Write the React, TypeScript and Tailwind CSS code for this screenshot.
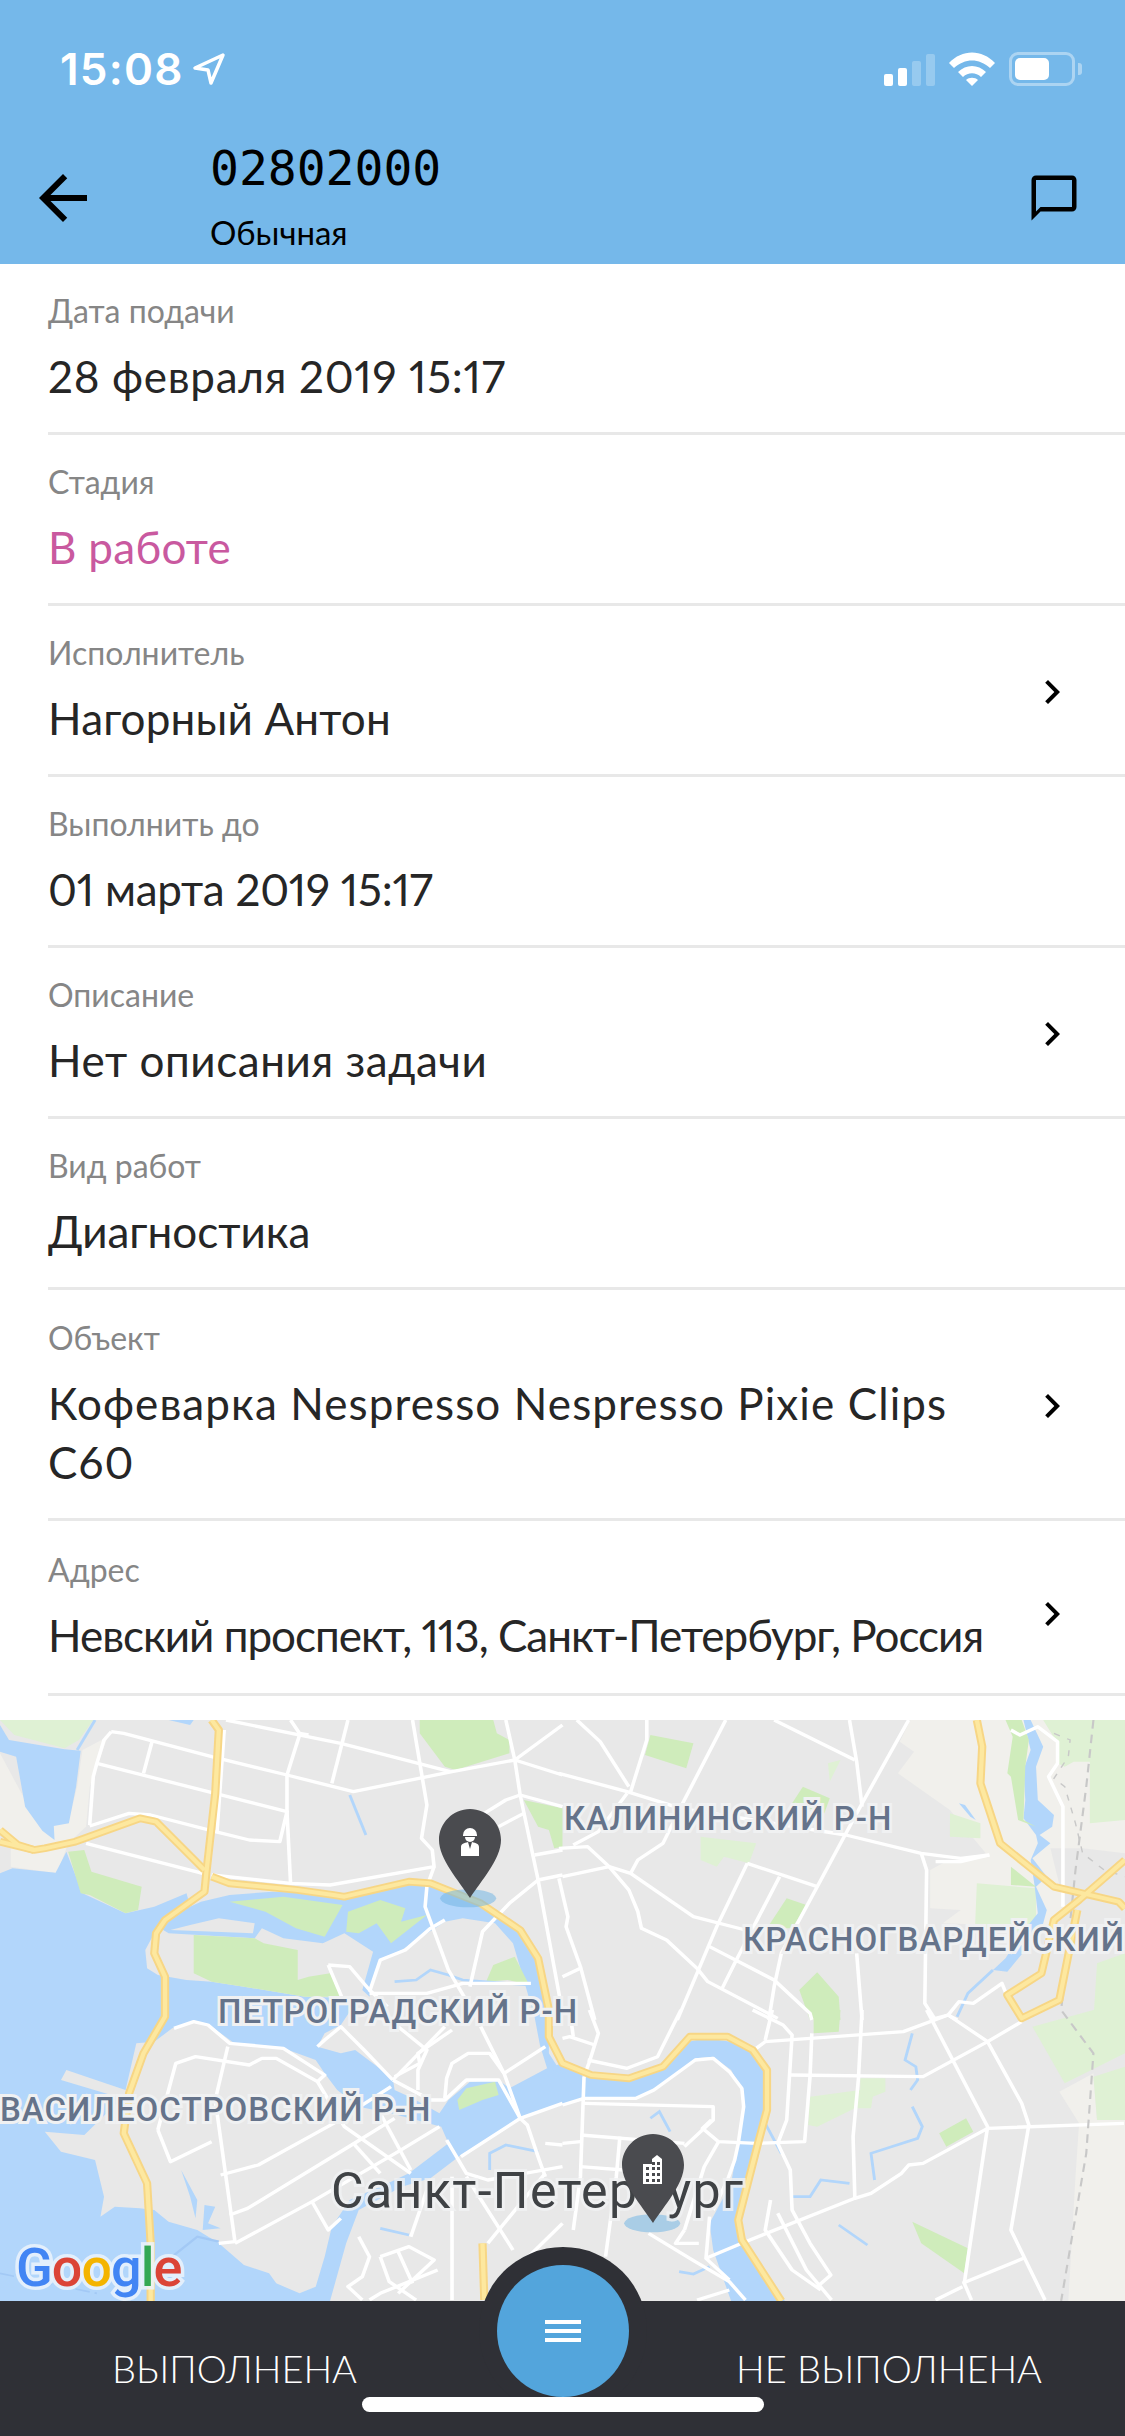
import type { ReactNode } from 'react'

const font = 'font-["Lato","Noto_Sans",sans-serif]'

// map is sketched in crop units: 1568 wide per 563px, 3 units per px high
const waterAreas = [
  '0,15 25,60 180,88 225,92 212,200 192,310 150,318 152,360 118,332 70,260 45,110 0,95',
  '0,460 35,445 155,458 185,395 230,520 350,580 430,560 520,520 525,540 470,590 430,640 405,690 410,745 440,765 520,780 590,785 680,800 850,830 1000,835 950,915 905,940 885,980 950,1000 990,990 1095,1075 1100,1110 1150,1135 1225,1180 1250,1140 1310,1085 1390,1080 1420,1105 1525,1045 1568,1030 1628,1065 1748,1075 1848,1040 1918,965 1968,955 2038,965 2098,990 2138,1050 2138,1170 2068,1490 2068,1570 2188,1743 2038,1743 1988,1590 1978,1510 2038,1390 2058,1270 2073,1160 2068,1110 2038,1050 1988,1010 1938,1015 1848,1090 1818,1110 1768,1135 1618,1135 1568,1155 1450,1195 1285,1305 1200,1375 1120,1400 1000,1470 965,1570 920,1743 0,1743',
  '440,620 470,590 560,545 640,525 760,515 900,520 960,540 1130,495 1210,495 1350,560 1450,630 1500,710 1530,900 1530,1000 1560,1050 1568,1060 1525,1045 1505,975 1490,890 1430,670 1380,610 1290,595 1240,605 1120,690 1065,715 1035,800 1030,830 1010,810 1040,695 960,640 900,670 790,655 730,625 710,655 470,640',
  '2853,0 2873,0 2908,80 2888,140 2893,240 2938,285 2933,320 2898,345 2928,370 2878,415 2918,470 2888,500 2918,570 2903,630 2858,690 2808,755 2768,750 2803,715 2848,640 2893,580 2883,490 2873,420 2893,370 2888,345 2853,295 2858,240 2853,150 2873,90',
  '2673,250 2690,255 2720,300 2705,290',
  '470,0 540,0 530,15',
]

const greyIslands = [
  '380,970 430,965 480,925 540,905 590,920 660,975 790,985 880,1020 905,1060 940,1110 1000,1160 1090,1180 1230,1220 1250,1270 1140,1360 1090,1385 975,1440 925,1520 905,1610 880,1700 835,1720 770,1690 750,1660 680,1635 610,1570 550,1530 470,1505 430,1470 390,1465 320,1460 280,1490 290,1430 265,1320 170,1295 125,1235 235,1245 340,1135 170,1080 185,1050 300,1092 350,1110',
  '530,615 610,595 710,610 705,640 475,630',
]

const offLand = [
  '0,100 110,320 150,310 190,310 215,200 230,90 300,50 250,200 240,320 190,370 160,460 30,440 30,380 0,340',
  '2538,0 3136,0 3136,400 3018,385 2928,385 2968,560 2928,620 2628,610 2678,570 2593,565 2593,450 2628,430 2748,400 2648,270 2503,160 2548,95 2508,65',
  '2953,1115 3048,1060 3058,1200 3136,1200 3136,1743 2978,1743 2998,1370 3008,1210',
]

const paleGreen = [
  '0,0 260,0 220,60 180,85 40,45',
  '1953,350 2108,370 2088,430 2018,410 1998,440 1953,420',
  '2308,130 2343,120 2313,185',
  '2648,280 2733,310 2733,355 2648,350',
  '2723,490 2888,505 2888,640 2718,620',
  '2908,0 3136,0 3136,300 3038,310 3038,125 2993,125 2968,140 2948,130 2948,70',
  '3058,730 3136,700 3136,870 3378,870 3048,900',
  '2878,920 3048,870 3136,870 3136,1000 2968,1090',
  '3048,1070 3136,1040 3136,1200 3058,1200',
  '2258,1130 2398,1110 2398,1075 2468,1075 2468,1115 2433,1130 2428,1165 2383,1165 2278,1220 2253,1215',
  '655,1245 760,1210 810,1280 710,1330',
]

const parks = [
  '190,395 235,390 255,455 395,500 385,570 350,580 250,525 225,520',
  '640,545 790,530 955,555 905,650 825,625 740,575',
  '970,575 1060,540 1130,565 1118,605 1190,585 1090,670 1050,610 1000,640 965,635',
  '540,645 710,655 735,670 830,690 830,780 860,770 920,760 950,830 850,830 680,800 590,785 540,760',
  '1170,0 1375,0 1385,40 1420,60 1420,100 1270,150 1240,140 1170,40',
  '1460,240 1568,265 1568,380 1545,385 1530,330 1500,320',
  '1355,785 1375,735 1435,710 1475,795 1415,780',
  '1813,45 1933,70 1913,145 1798,105',
  '2238,200 2313,235 2298,280 2208,250',
  '2193,535 2248,555 2208,625 2138,625',
  '2228,810 2278,757 2338,830 2343,900 2258,900',
  '2803,0 2848,0 2868,60 2858,140 2853,300 2888,320 2838,300 2818,170 2808,160 2823,50',
  '2818,440 2888,500 2818,495',
  '2268,870 2343,870 2338,935 2268,940',
  '2618,1240 2693,1195 2713,1235 2638,1280',
  '2543,1505 2698,1585 2688,1660 2568,1570',
  '1275,1140 1300,1105 1380,1085 1390,1125 1345,1140 1280,1170',
]

const roads = [
  '630,0 950,70 1255,155',
  '310,35 345,40 590,110 800,165 985,215 1260,155 1435,120',
  '310,35 290,60 270,130 260,170 250,315',
  '270,130 580,215 800,275 780,365 695,360 600,335 420,285 360,280 250,318',
  '425,60 400,160',
  '800,165 800,275 810,490',
  '835,45 800,165',
  '810,0 835,40 860,45',
  '970,0 925,190',
  '625,30 605,335',
  '1150,0 1190,255 1175,355 1205,390 1210,440 920,495 810,490 590,465',
  '240,370 565,460',
  '1410,0 1435,120 1450,225 1500,480 1565,860',
  '1568,15 1435,120 1568,165',
  '1450,225 1568,260',
  '1350,280 1410,240 1450,225',
  '1390,320 1460,280',
  '1500,480 1568,465',
  '1490,405 1568,390',
  '1500,480 1420,550 1345,635 1310,800',
  '1210,440 1190,500 1185,560 1250,750 1310,860',
  '915,735 975,740 1030,810 1080,860',
  '915,735 960,850',
  '1030,820 1190,820 1290,790 1480,790',
  '1240,600 1200,625 1130,690 1060,720 1030,815',
  // top right
  '1558,160 1748,215 1898,265 2358,345 2568,400 2678,415 2758,405',
  '1803,0 1803,60 1758,215',
  '1608,0 1673,65 1753,200',
  '1748,220 1668,335 1598,375',
  '1558,385 1638,380 1698,440 1753,510 1778,575 1788,625 1858,660 1943,745 1973,785 2168,895',
  '1568,470 1698,440 1758,460 1933,590 2078,630',
  '2023,0 1903,250 1848,370 1778,420 1758,460',
  '1558,475 1583,590 1578,620 1618,740 1658,900',
  '1568,770 1618,745',
  '2533,0 2398,260 2278,500 2178,700 2158,800 2143,900',
  '2368,0 2388,125 2403,260',
  '2158,0 2383,120',
  '2083,430 2278,500',
  '2173,470 2048,730 2013,805',
  '2083,430 1998,620 1888,900',
  '1978,680 2158,780 2258,880 2263,900',
  '2568,400 2583,450 2578,850 2608,900',
  '2608,425 2678,425 2758,405',
  '2388,700 2403,900',
  '2643,885 2673,845 2713,850 2793,790 2808,830',
  '2608,895 2643,885 2668,900',
  '2818,30 2843,45 2893,20 2948,65 2948,130 2923,170 2963,260 2963,560',
  // lower left
  '440,1230 490,1030 545,1010 695,1035 730,1015 770,1015 885,1085 960,1220 1145,1360',
  '440,1230 475,1325 590,1265',
  '485,925 540,905 580,915 640,970 790,985 905,1065 885,1085',
  '635,980 600,1140 655,1565 610,1570',
  '615,1365 720,1335 930,1210 1090,1100',
  '640,1485 690,1465 980,1275 1100,1195',
  '655,1570 870,1445 1110,1295 1225,1220',
  '870,1445 915,1530 950,1495',
  '985,1270 1060,1360',
  '1060,1180 1145,1350',
  '1095,1080 1240,920',
  '1100,1070 1170,1030 1165,1000 1260,930',
  '1095,1080 1200,1140 1240,1140 1300,1080 1390,1080 1450,1195',
  '1240,1135 1245,1075 1260,1030 1305,1000 1365,1000 1405,1060',
  '1405,1060 1520,980',
  '1340,920 1405,1060 1450,1195 1470,1215 1500,1310 1520,1370',
  '885,980 905,960 950,920 1015,990 1095,1080',
  '1110,920 1190,990 1165,1050 1165,1110',
  '1285,1310 1450,1195 1568,1150',
  '1245,1260 1300,1360 1360,1380 1568,1340',
  '1060,1610 1140,1580 1210,1620 1110,1720',
  '1060,1610 1085,1685 1160,1740',
  '1110,1595 1150,1690',
  '1000,1550 1030,1610 1010,1670 970,1700 1010,1740',
  '1030,1740 1060,1720 1220,1650',
  '1145,1550 1190,1410',
  '1300,1370 1430,1590',
  '1260,1370 1260,1740',
  '1520,1360 1360,1570',
  '1520,1270 1568,1275',
  '1350,1740 1568,1510',
  // lower right
  '1568,1155 1628,1135 1773,1135 1823,1110 1938,1020 1988,1015 2033,1055 2068,1105 2073,1160 2058,1270 2048,1320 2028,1380 1988,1470',
  '1628,1070 1618,1370 1598,1530',
  '1628,1150 1988,1160 1988,1200 1908,1280',
  '1638,1020 1748,1045 1833,1010 1898,870',
  '1643,870 1668,940 1643,1025 1628,1070',
  '1568,955 1588,950 1658,975',
  '1588,870 1598,950',
  '1568,1270 1618,1265',
  '1618,1245 1908,1270',
  '1728,1250 1718,1370 1688,1610',
  '1618,1340 1738,1350',
  '1983,1200 1958,1225 2003,1265 2108,1270 2243,1265 2258,1070',
  '2003,1265 1963,1340 1908,1530',
  '2108,985 2133,965 2518,935 2643,885',
  '2153,870 2133,960',
  '2098,870 2183,915 2208,945 2193,1200 2168,1270 2203,1350 2208,1470 2258,1570 2316,1665 2278,1700',
  '2168,1480 2248,1650 2318,1740',
  '2263,940 2258,1070',
  '2203,1065 2573,1070 2753,965 2848,905',
  '2403,870 2393,1075 2378,1250 2383,1435',
  '1968,1615 2078,1565 2383,1435 2428,1420 2513,1360 2533,1335 2573,1330 2753,1225 3133,1210',
  '2583,870 2753,1220 2688,1690 2708,1740',
  '2643,885 2753,965 2848,1150 2868,1215 2818,1530 2913,1740',
  '2683,1690 2853,1615',
  '2608,1740 2683,1700',
  '2148,1440 2133,1530 2208,1650 2288,1710',
  '1808,1540 1938,1625 2033,1685 2078,1740',
  '1978,1490 1968,1615 2033,1680',
  '1908,1530 1883,1570 1948,1570',
  '1943,1740 2033,1710',
]

const streams = [
  '975,225 1020,345',
  '1100,785 1160,780 1200,750 1250,765 1290,780 1480,795',
  '215,90 265,0',
  '2668,890 2698,820 2768,750',
  '2543,940 2523,1020 2553,1040 2558,1080 2538,1110',
  '2543,1160 2571,1220 2558,1255 2428,1300 2438,1380',
  '2208,1430 2258,1430 2288,1380 2368,1390',
  '2338,1515 2418,1575',
  '1813,1195 1838,1175 1868,1235',
  '1893,1655 1933,1662 1978,1640',
  '2133,1210 2178,1300',
  '1365,1350 1365,1300 1410,1275 1500,1295',
  '1060,1525 1140,1545',
]

const motorways = [
  '0,330 50,375 95,390 125,385 210,365 390,295 435,305 570,450',
  '0,365 95,390',
  '590,0 610,30 600,220 575,460 570,515 460,600 435,640 430,700 460,770 460,890 400,1000 360,1120 345,1240 410,1390 420,1570 420,1743',
  '590,470 640,490 830,510 930,525 960,530 1140,485 1200,490 1340,550 1450,630 1500,715 1530,870 1530,950 1568,1030 1648,1065 1753,1075 1848,1040 1923,950 2028,950 2098,990 2138,1050 2138,1170 2113,1270 2058,1500 2068,1560 2178,1743',
  '2723,0 2738,80 2733,190 2788,370 2938,500 3118,545 3136,565',
  '3136,420 3008,540 2938,600 2903,760 2808,825 2848,895 2953,840 3003,570',
  '1345,1570 1350,1740',
]

function CityMap() {
  return (
    <svg className="absolute inset-0 h-full w-full" viewBox="0 0 3136 1743" preserveAspectRatio="none">
      <rect width="3136" height="1743" fill="#e8e8e8" />
      {offLand.map((p) => <polygon key={p} points={p} fill="#f1f0ec" />)}
      {paleGreen.map((p) => <polygon key={p} points={p} fill="#dff1d4" />)}
      {waterAreas.map((p) => <polygon key={p} points={p} fill="#b2d6fb" />)}
      {greyIslands.map((p) => <polygon key={p} points={p} fill="#e8e8e8" />)}
      {parks.map((p) => <polygon key={p} points={p} fill="#cfecbb" />)}
      <polygon points="505,1350 550,1440 545,1495 530,1430" fill="#b2d6fb" />
      <polygon points="570,1455 600,1460 580,1510 615,1525 565,1530" fill="#b2d6fb" />
      <polyline points="0,1660 270,1720" fill="none" stroke="#a3c9f5" strokeWidth="5" strokeDasharray="40 14" />
      <polyline points="480,1610 550,1550 610,1565" fill="none" stroke="#a3c9f5" strokeWidth="7" />
      {streams.map((p) => <polyline key={p} points={p} fill="none" stroke="#b2d6fb" strokeWidth="8" />)}
      {roads.map((p) => <polyline key={p} points={p} fill="none" stroke="#ffffff" strokeWidth="10" strokeLinejoin="round" />)}
      <polyline points="3048,0 3028,200 2998,450 2958,870 3048,1000 3028,1300 2958,1743" fill="none" stroke="#c8c8c8" strokeWidth="6" strokeDasharray="26 18" />
      <polyline points="2938,40 2983,60 2978,110 2938,175 2968,200 2998,310 3018,400 3078,450 3136,470" fill="none" stroke="#c8c8c8" strokeWidth="4" strokeDasharray="18 22" />
      {motorways.map((p) => <polyline key={p} points={p} fill="none" stroke="#f7d685" strokeWidth="23" strokeLinejoin="round" />)}
      {motorways.map((p) => <polyline key={`${p}-c`} points={p} fill="none" stroke="#fde89f" strokeWidth="12" strokeLinejoin="round" />)}
      <ellipse cx="1305" cy="535" rx="78" ry="27" fill="#74b6e4" fillOpacity="0.55" />
      <ellipse cx="1818" cy="1510" rx="78" ry="27" fill="#74b6e4" fillOpacity="0.55" />
    </svg>
  )
}

function Pin({ className, children }: { className: string; children: ReactNode }) {
  return (
    <svg className={className} width="62" height="89" viewBox="0 0 62 89">
      <path d="M31 0C48 0 62 14 62 31C62 50 42 72 31 89C20 72 0 50 0 31C0 14 14 0 31 0Z" fill="#4a4b4f" />
      {children}
    </svg>
  )
}

const districtClass =
  'absolute whitespace-nowrap font-["Roboto",sans-serif] font-medium text-[33px] leading-none tracking-[1px] text-[#65738a] [-webkit-text-stroke:6px_#f0f1f2] [paint-order:stroke_fill]'

function MapPanel() {
  return (
    <div className="relative h-[581px] overflow-hidden">
      <CityMap />
      <span className={`${districtClass} left-[564px] top-[82px]`}>КАЛИНИНСКИЙ Р-Н</span>
      <span className={`${districtClass} left-[743px] top-[203px]`}>КРАСНОГВАРДЕЙСКИЙ</span>
      <span className={`${districtClass} left-[218px] top-[275px] tracking-[0.7px]`}>ПЕТРОГРАДСКИЙ Р-Н</span>
      <span className={`${districtClass} left-0 top-[373px] tracking-[0.85px]`}>ВАСИЛЕОСТРОВСКИЙ Р-Н</span>
      <span className='absolute left-[331px] top-[446px] whitespace-nowrap font-["Roboto",sans-serif] text-[50px] leading-none tracking-[1.4px] text-[#3f4245] [-webkit-text-stroke:6px_rgba(240,241,242,0.8)] [paint-order:stroke_fill]'>
        Санкт-Петербург
      </span>
      <Pin className="absolute left-[439px] top-[89px]">
        <path d="M24 26a7 7 0 0 1 14 0v1H24z" fill="#fff" />
        <path d="M26 28h10a5 5 0 0 1-10 0z" fill="#fff" />
        <path d="M22 47v-9c0-3 3-4 7-5l2 7 2-7c4 1 7 2 7 5v9z" fill="#fff" />
      </Pin>
      <Pin className="absolute left-[622px] top-[414px]">
        <path d="M21 50V30h9v-5l5-4 5 4v25z" fill="#fff" />
        <path d="M24 33h3v3h-3zM30 33h3v3h-3zM35 33h3v3h-3zM24 39h3v3h-3zM30 39h3v3h-3zM35 39h3v3h-3zM24 45h3v3h-3zM30 45h3v3h-3zM35 45h3v3h-3zM30 28h3v3h-3zM35 28h3v3h-3z" fill="#4a4b4f" />
      </Pin>
      <span className='absolute left-[16px] top-[521px] whitespace-nowrap font-["Roboto",sans-serif] font-medium text-[54px] leading-none tracking-[-1px] [-webkit-text-stroke:7px_rgba(235,243,252,0.85)] [paint-order:stroke_fill]'>
        <span className="text-[#4285f4]">G</span>
        <span className="text-[#db4437]">o</span>
        <span className="text-[#f4b400]">o</span>
        <span className="text-[#4285f4]">g</span>
        <span className="text-[#34a853]">l</span>
        <span className="text-[#db4437]">e</span>
      </span>
    </div>
  )
}

function Chevron({ className = '' }: { className?: string }) {
  return (
    <svg className={`h-12 w-12 shrink-0 ${className}`} viewBox="0 0 24 24" fill="#000">
      <path d="M10 6L8.59 7.41 13.17 12l-4.58 4.59L10 18l6-6z" />
    </svg>
  )
}

interface RowProps {
  label: string
  value: string
  arrow?: string
  valueClass?: string
  rowClass?: string
}

function Row({ label, value, arrow, valueClass = '', rowClass = 'h-[171px]' }: RowProps) {
  return (
    <div className={`ml-[48px] flex items-center border-b-[3px] border-[#e8e8e8] pt-[3px] ${rowClass}`}>
      <div className="min-w-0 flex-1">
        <p className="text-[32px] leading-[36px] text-[#868686]">{label}</p>
        <p className={`mt-[18px] text-[44px] leading-[59px] text-[#262626] proportional-nums ${valueClass}`}>{value}</p>
      </div>
      {arrow && <Chevron className={arrow} />}
    </div>
  )
}

function StatusBar() {
  return (
    <div className="flex h-[138px] items-start justify-between pt-[44px] pr-[43px] pl-[60px]">
      <div className="flex items-center gap-[8px]">
        <span className='font-["Inter",sans-serif] text-[44px] leading-[50px] font-semibold tracking-[1.2px] text-white'>15:08</span>
        <svg width="34" height="34" viewBox="0 0 34 34" fill="none">
          <path d="M31 3L3 16l13 2 3 13z" stroke="#fff" strokeWidth="3.5" strokeLinejoin="round" />
        </svg>
      </div>
      <div className="flex items-end gap-[14px] pt-[8px]">
        <div className="flex items-end gap-[5px]">
          <span className="h-[12px] w-[9px] rounded-[2px] bg-white" />
          <span className="h-[18px] w-[9px] rounded-[2px] bg-white" />
          <span className="h-[25px] w-[9px] rounded-[2px] bg-white/25" />
          <span className="h-[32px] w-[9px] rounded-[2px] bg-white/25" />
        </div>
        <svg width="46" height="34" viewBox="0 0 46 34" fill="#fff">
          <path d="M0 11C13-3 33-3 46 11l-5 5C30 6 16 6 5 16z" />
          <path d="M9 20c8-8 20-8 28 0l-5 5c-5-5-13-5-18 0z" />
          <path d="M17 28c3-3 9-3 12 0l-6 6z" />
        </svg>
        <div className="flex items-center gap-[3px]">
          <div className="h-[34px] w-[66px] rounded-[9px] border-[3px] border-white/40 p-[3px]">
            <div className="h-full w-[34px] rounded-[5px] bg-white" />
          </div>
          <span className="h-[12px] w-[4px] rounded-r-[3px] bg-white/40" />
        </div>
      </div>
    </div>
  )
}

export default function App() {
  return (
    <div className={`flex h-[2436px] w-[1125px] flex-col overflow-hidden bg-white ${font}`}>
      <header className="h-[264px] bg-[#75b8ea]">
        <StatusBar />
        <div className="flex items-start">
          <svg className="mt-[24px] ml-[27px] h-[72px] w-[72px] shrink-0" viewBox="0 0 24 24" fill="#000">
            <path d="M20 11H7.83l5.59-5.59L12 4l-8 8 8 8 1.41-1.41L7.83 13H20v-2z" />
          </svg>
          <div className="ml-[111px] flex-1 pt-[2px]">
            <p className='font-["DejaVu_Sans_Mono",monospace] text-[48px] leading-[56px] text-black'>02802000</p>
            <p className="mt-[16px] text-[33px] leading-[40px] text-black">Обычная</p>
          </div>
          <svg className="mt-[33px] mr-[44px] h-[54px] w-[54px] shrink-0" viewBox="0 0 24 24" fill="#000">
            <path d="M20 2H4c-1.1 0-2 .9-2 2v18l4-4h14c1.1 0 2-.9 2-2V4c0-1.1-.9-2-2-2zm0 14H6l-2 2V4h16v12z" />
          </svg>
        </div>
      </header>

      <section>
        <Row label="Дата подачи" value="28 февраля 2019 15:17" valueClass="tracking-[0.7px]" />
        <Row label="Стадия" value="В работе" valueClass="!text-[#c9599f] tracking-[0.3px]" />
        <Row label="Исполнитель" value="Нагорный Антон" arrow="mr-[49px] ml-[5px]" valueClass="tracking-[0.2px]" />
        <Row label="Выполнить до" value="01 марта 2019 15:17" valueClass="tracking-[-0.25px]" />
        <Row label="Описание" value="Нет описания задачи" arrow="mr-[49px] ml-[5px]" valueClass="tracking-[0.55px]" />
        <Row label="Вид работ" value="Диагностика" />
        <Row
          label="Объект"
          value="Кофеварка Nespresso Nespresso Pixie Clips C60"
          arrow="mr-[49px] ml-[5px]"
          valueClass="max-w-[960px] tracking-[1.1px]"
          rowClass="h-[231px]"
        />
        <Row
          label="Адрес"
          value="Невский проспект, 113, Санкт-Петербург, Россия"
          arrow="mt-[10px] mr-[49px] ml-[5px]"
          valueClass="tracking-[-1px]"
          rowClass="h-[175px]"
        />
      </section>

      <div className="mt-auto">
        <MapPanel />
        <footer className="relative flex h-[135px] items-start justify-between bg-[#2f3036] pt-[42px] pr-[83px] pl-[112px] text-[38px] leading-[50px] font-light text-white">
          <span>ВЫПОЛНЕНА</span>
          <span>НЕ ВЫПОЛНЕНА</span>
          <div className="absolute -top-[54px] left-1/2 flex h-[168px] w-[168px] -translate-x-1/2 items-center justify-center rounded-full bg-[#2f3036]">
            <button className="flex h-[132px] w-[132px] flex-col items-center justify-center gap-[5px] rounded-full bg-[#53a5dc]">
              <span className="h-[4px] w-[36px] bg-white" />
              <span className="h-[4px] w-[36px] bg-white" />
              <span className="h-[4px] w-[36px] bg-white" />
            </button>
          </div>
          <div className="absolute bottom-[24px] left-[362px] h-[15px] w-[402px] rounded-full bg-white" />
        </footer>
      </div>
    </div>
  )
}
